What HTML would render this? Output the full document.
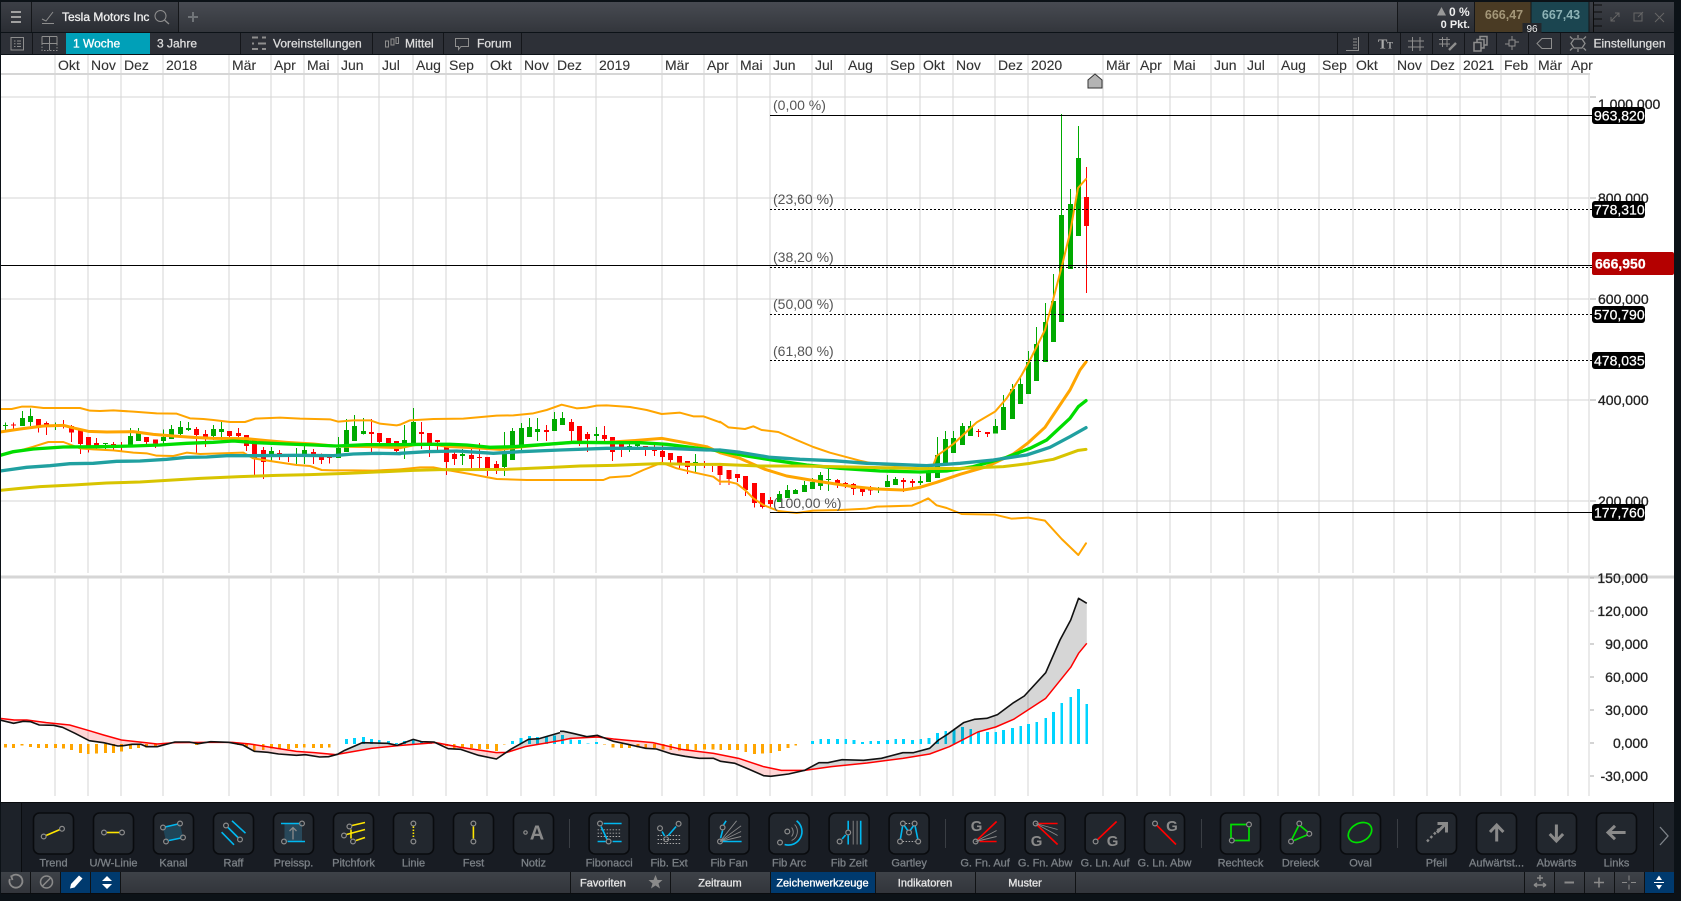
<!DOCTYPE html>
<html lang="de"><head><meta charset="utf-8"><title>Tesla Motors Inc</title>
<style>
html,body{margin:0;padding:0;background:#0c1217;width:1681px;height:901px;overflow:hidden}
svg{display:block;position:absolute;left:0;top:0}
text{font-family:"Liberation Sans",sans-serif}
.t{font-size:12px;fill:#dcdcdc;stroke:#dcdcdc;stroke-width:.3}
.tb{font-size:11px;fill:#e4e4e4;stroke:#e4e4e4;stroke-width:.35}
.h{font-size:14px;fill:#333;stroke:#333;stroke-width:.12}
.a{font-size:14px;fill:#222;stroke:#222;stroke-width:.3}
.r{text-anchor:end}
.w{font-size:14px;fill:#fff;stroke:#fff;stroke-width:.25}
.f{font-size:14px;fill:#555}
.l{font-size:11px;fill:#7b8086;stroke:#7b8086;stroke-width:.3;text-anchor:middle}
.c{text-anchor:middle}
.n{fill:none;stroke:#8c8c8c;stroke-width:1.2}
.y{stroke:#ffe600;stroke-width:1.6;fill:none}
.b{stroke:#00b8f0;stroke-width:1.6;fill:none}
.e{stroke:#f00;stroke-width:1.6;fill:none}
.g{stroke:#00e000;stroke-width:1.7;fill:none}
.s{stroke:#8a8a8a;stroke-width:.9;fill:none}
.d{stroke:#aaa;stroke-width:.9;stroke-dasharray:1.5 1.5;fill:none}
.G{font-size:15px;font-weight:bold;fill:#8a8a8a;text-anchor:middle}
.i{fill:none;stroke:#8e8e8e;stroke-width:1}
.ar{stroke:#8a8a8a;stroke-width:3;fill:none}
</style></head><body>
<svg width="1681" height="901" viewBox="0 0 1681 901" xmlns="http://www.w3.org/2000/svg">
<defs>
<linearGradient id="tg" x1="0" y1="0" x2="0" y2="1"><stop offset="0" stop-color="#484b52"/><stop offset="1" stop-color="#33363c"/></linearGradient>
<linearGradient id="tg2" x1="0" y1="0" x2="0" y2="1"><stop offset="0" stop-color="#3c3f46"/><stop offset="1" stop-color="#2a2d33"/></linearGradient>
<linearGradient id="bg" x1="0" y1="0" x2="0" y2="1"><stop offset="0" stop-color="#3e4248"/><stop offset="1" stop-color="#32353b"/></linearGradient>
<rect id="bt" x=".5" y=".5" width="40" height="41" rx="6" fill="#22272e" stroke="#090b0e" stroke-width="1.6"/>
</defs>

<!-- white chart -->
<rect x="1" y="55" width="1673" height="747" fill="#fff"/>

<!-- grid -->
<g shape-rendering="crispEdges" fill="none" stroke="#d6d6d6">
<path stroke-dasharray="518 5 218" d="M55 55V796M88 55V796M121 55V796M163 55V796M229 55V796M271 55V796M304 55V796M338 55V796M379 55V796M413 55V796M446 55V796M487 55V796M521 55V796M554 55V796M596 55V796M662 55V796M704 55V796M737 55V796M770 55V796M812 55V796M845 55V796M887 55V796M920 55V796M953 55V796M995 55V796M1028 55V796M1103 55V796M1137 55V796M1170 55V796M1211 55V796M1244 55V796M1278 55V796M1319 55V796M1353 55V796M1394 55V796M1427 55V796M1460 55V796M1501 55V796M1535 55V796M1568 55V796"/>
<path d="M1 97H1589M1 198H1589M1 299H1589M1 400H1589M1 501H1589M1589 74V796"/>
<path stroke-width="2" d="M1 74H1590"/>
<path stroke-width="3" d="M1 577H1674"/>
<path stroke="#aaa" d="M1590 97H1596M1590 198H1596M1590 299H1596M1590 400H1596M1590 501H1596M1590 578H1594M1590 611H1594M1590 644H1594M1590 677H1594M1590 710H1594M1590 743H1594M1590 776H1594"/>
</g>

<!-- time labels -->
<g>
<text class="h" x="58" y="70">Okt</text><text class="h" x="91" y="70">Nov</text><text class="h" x="124" y="70">Dez</text><text class="h" x="166" y="70">2018</text><text class="h" x="232" y="70">Mär</text><text class="h" x="274" y="70">Apr</text><text class="h" x="307" y="70">Mai</text><text class="h" x="341" y="70">Jun</text><text class="h" x="382" y="70">Jul</text><text class="h" x="416" y="70">Aug</text><text class="h" x="449" y="70">Sep</text><text class="h" x="490" y="70">Okt</text><text class="h" x="524" y="70">Nov</text><text class="h" x="557" y="70">Dez</text><text class="h" x="599" y="70">2019</text><text class="h" x="665" y="70">Mär</text><text class="h" x="707" y="70">Apr</text><text class="h" x="740" y="70">Mai</text><text class="h" x="773" y="70">Jun</text><text class="h" x="815" y="70">Jul</text><text class="h" x="848" y="70">Aug</text><text class="h" x="890" y="70">Sep</text><text class="h" x="923" y="70">Okt</text><text class="h" x="956" y="70">Nov</text><text class="h" x="998" y="70">Dez</text><text class="h" x="1031" y="70">2020</text><text class="h" x="1106" y="70">Mär</text><text class="h" x="1140" y="70">Apr</text><text class="h" x="1173" y="70">Mai</text><text class="h" x="1214" y="70">Jun</text><text class="h" x="1247" y="70">Jul</text><text class="h" x="1281" y="70">Aug</text><text class="h" x="1322" y="70">Sep</text><text class="h" x="1356" y="70">Okt</text><text class="h" x="1397" y="70">Nov</text><text class="h" x="1430" y="70">Dez</text><text class="h" x="1463" y="70">2021</text><text class="h" x="1504" y="70">Feb</text><text class="h" x="1538" y="70">Mär</text><text class="h" x="1571" y="70">Apr</text>
</g>
<polygon points="1095,74 1102,80 1102,88 1088,88 1088,80" fill="#b4b4b4" stroke="#333"/>

<!-- candles -->
<g fill="none" shape-rendering="crispEdges">
<g transform="translate(0 390) scale(.33333)">
<path stroke="#00aa00" stroke-width="3" d="M16 97V120M67 63V108M91 55V108M166 97V120M316 159V178M391 114V167M415 114V153M490 118V160M514 105V147M541 93V135M565 96V123M640 105V150M664 96V150M814 171V216M889 174V222M913 162V222M1015 141V204M1039 87V186M1063 75V153M1090 84V133"/>
<path stroke="#00aa00" stroke-width="15" d="M16 105V108M67 84V108M91 78V96M166 105V108M316 159V162M391 138V165M415 131V153M490 141V153M514 117V147M541 111V132M565 114V120M640 117V138M664 117V126M814 183V195M913 180V192M1015 174V204M1039 120V186M1063 108V153M1090 123V132"/>
<path stroke="#f00" stroke-width="3" d="M40 97V118M115 87V128M139 94V135M190 90V115M214 105V156M241 118V192M265 141V188M289 144V180M340 156V180M364 156V182M439 141V162M466 148V174M589 111V189M616 120V171M688 123V150M715 114V141M739 135V183M763 150V255M790 171V267M838 180V210M865 198V216M940 177V222M964 190V222M988 195V220M1114 87V186M1138 129V160M1165 144V160M1189 153V186"/>
<path stroke="#f00" stroke-width="15" d="M40 104V107M115 87V108M139 99V110M190 103V107M214 108V128M241 120V162M265 141V168M289 159V168M340 162V168M439 141V156M466 148V160M589 117V135M616 132V141M688 123V138M715 129V138M739 135V168M763 150V207M790 180V216M838 189V192M940 186V192M964 201V210M988 201V204M1114 126V132M1138 129V156M1165 144V160M1189 153V183"/>
</g>
<g transform="translate(400 390) scale(.33333)">
<path stroke="#00aa00" stroke-width="3" d="M13 105V207M40 54V160M187 177V225M313 126V258M337 114V210M364 99V180M388 84V141M412 84V153M463 66V123M487 66V105M589 111V153M688 150V186M712 156V180M886 192V246"/>
<path stroke="#00aa00" stroke-width="15" d="M13 150V168M40 96V160M187 192V198M313 192V231M337 123V210M364 114V165M388 111V141M412 117V126M463 87V123M487 84V105M589 132V138M688 168V174M712 162V168M886 216V219"/>
<path stroke="#f00" stroke-width="3" d="M64 96V177M88 129V201M112 150V180M139 162V255M163 180V225M214 162V234M238 159V234M262 201V258M289 213V252M439 105V153M514 87V153M538 108V168M562 126V186M613 108V156M637 141V213M664 150V201M736 168V198M763 156V198M787 165V216M811 189V219M838 198V237M862 213V252M913 213V234M937 228V246"/>
<path stroke="#f00" stroke-width="15" d="M64 126V132M88 129V168M112 150V156M139 171V216M163 192V207M214 195V207M238 201V204M262 201V243M289 222V234M439 120V126M514 96V123M538 108V153M562 132V147M613 135V147M637 141V186M664 162V171M736 168V174M763 180V183M787 183V201M811 189V210M838 198V222M862 213V231"/>
</g>
<g transform="translate(720 370) scale(.33333)">
<path stroke="#00aa00" stroke-width="3" d="M178 363V396M202 345V384M226 357V372M253 333V366M277 324V357M301 306V360M325 297V363M475 351V369M502 315V351M526 321V345M601 318V345M625 285V336M652 201V324M676 183V282M700 183V249M727 159V225M751 153V198M826 147V190M850 75V180M877 42V147M901 24V102"/>
<path stroke="#00aa00" stroke-width="15" d="M178 372V396M202 360V384M226 360V372M253 345V366M277 336V357M301 315V348M325 327V330M475 354V357M502 333V351M526 327V345M601 333V339M625 306V336M652 255V324M676 207V282M700 204V249M727 168V225M751 168V198M826 168V190M850 111V180M877 57V147M901 42V102"/>
<path stroke="#f00" stroke-width="3" d="M0 288V345M27 300V345M52 312V336M76 318V378M103 339V413M127 369V416M151 381V414M352 327V354M376 336V354M400 339V375M427 351V378M451 348V375M550 324V366M577 327V351M775 177V201M802 186V201"/>
<path stroke="#f00" stroke-width="15" d="M0 288V315M27 300V327M52 312V324M76 318V360M103 339V399M127 369V411M151 390V402M352 330V339M376 339V342M400 342V357M427 354V366M451 357V362M550 330V336M577 333V339M775 183V186M802 186V192"/>
</g>
<path stroke="#00aa00" stroke-width="1" d="M1028.5 351V394M1036.5 327V381M1045.5 303V362M1053.5 274V342M1061.5 114V322M1070.5 189V269M1078.5 126V236"/>
<path stroke="#00aa00" stroke-width="5" d="M1028.5 362V394M1036.5 344V381M1045.5 322V362M1053.5 301V342M1061.5 215V322M1070.5 204V269M1078.5 158V236"/>
<path stroke="#f00" stroke-width="1" d="M1086.5 167V293"/>
<path stroke="#f00" stroke-width="5" d="M1086.5 197V226"/>
</g>

<!-- moving averages / bands -->
<g fill="none" stroke-linejoin="round" stroke-linecap="round">
<g transform="translate(0 390) scale(.33333)">
<path stroke="#ffa500" stroke-width="6" d="M0 57L35 57 65 50 95 50 130 54 240 54 270 62 300 63 340 61 400 65 470 70 530 71 570 85 610 87 640 90 690 96 735 96 765 86 840 83 900 86 990 88 1015 95 1060 91 1110 91 1140 101 1190 106 1200 104"/>
<path stroke="#ffa500" stroke-width="6" d="M0 195L30 190 100 170 145 156 190 156 240 175 280 178 340 181 400 188 440 190 470 197 520 198 560 188 600 192 660 190 730 188 760 205 830 216 890 225 930 228 965 240 1000 241 1060 241 1120 242 1200 238"/>
<path stroke="#ffa500" stroke-width="9" d="M0 126L60 117 130 108 190 106 225 115 265 124 320 126 400 125 460 133 520 138 580 142 640 145 740 146 800 152 860 157 940 162 1000 168 1060 169 1120 170 1200 173"/>
<path stroke="#00dd00" stroke-width="10" d="M0 196L40 185 100 177 190 171 300 170 400 168 480 165 560 160 640 157 700 153 770 158 860 162 940 165 1010 168 1100 164 1200 164"/>
<path stroke="#20a0a0" stroke-width="10" d="M0 243L80 232 150 227 210 221 280 220 350 214 420 213 500 208 560 202 620 201 680 197 760 197 890 196 1000 197 1060 192 1130 190 1200 191"/>
<path stroke="#d8c400" stroke-width="9" d="M0 301L60 295 120 290 220 285 320 279 420 276 500 271 600 265 720 260 830 256 930 254 1040 250 1200 243"/>
</g>
<g transform="translate(400 390) scale(.33333)">
<path stroke="#ffa500" stroke-width="6" d="M0 104L30 91 100 87 190 86 290 77 340 76 400 70 440 60 485 44 530 55 560 53 590 47 620 46 690 51 740 60 785 72 840 68 880 79 910 79 960 97"/>
<path stroke="#ffa500" stroke-width="6" d="M0 238L60 232 100 232 130 238 210 252 290 267 380 270 610 270 630 262 690 258 730 240 785 218 830 235 880 247 940 260 960 275"/>
<path stroke="#ffa500" stroke-width="9" d="M0 173L50 163 100 163 150 170 220 173 300 178 370 170 440 163 520 157 620 157 700 152 785 145 850 157 920 170 960 188"/>
<path stroke="#00dd00" stroke-width="10" d="M0 164L80 163 150 163 200 165 270 172 340 170 440 163 520 157 620 158 720 158 800 163 880 173 960 183"/>
<path stroke="#20a0a0" stroke-width="10" d="M0 190L80 185 170 183 280 190 360 185 480 180 620 175 800 175 920 180 960 180"/>
<path stroke="#d8c400" stroke-width="9" d="M0 243L40 241 120 239 200 239 320 238 440 233 540 228 640 226 780 221 880 223 960 223"/>
</g>
<g transform="translate(720 370) scale(.33333)">
<path stroke="#ffa500" stroke-width="6" d="M0 155L25 172 75 177 100 169 125 180 175 186 225 208 280 231 330 248 375 260 420 272 470 283 530 287 600 287 640 285 650 258 700 222 770 157 825 125 860 85 905 15 930 -30"/>
<path stroke="#ffa500" stroke-width="6" d="M0 335L25 335 50 341 75 360 100 385 130 405 175 423 230 429 280 422 360 420 440 416 470 410 575 407 600 397 625 385 650 406 680 414 725 432 825 434 875 446 925 443 975 452 1025 507 1075 555 1098 520"/>
<path stroke="#ffa500" stroke-width="9" d="M0 248L60 265 135 298 200 318 300 335 400 350 470 357 550 360 600 352 650 337 720 313 800 290 880 252 925 218 975 172 1050 60 1080 0 1098 -24"/>
<path stroke="#00dd00" stroke-width="10" d="M0 243L80 258 170 272 260 285 360 295 480 303 600 306 680 303 760 290 860 262 930 235 980 210 1050 145 1075 110 1098 92"/>
<path stroke="#20a0a0" stroke-width="10" d="M0 240L60 247 150 262 240 268 340 272 440 280 520 283 620 287 720 280 820 270 920 255 990 232 1050 200 1098 173"/>
<path stroke="#d8c400" stroke-width="9" d="M0 283L120 288 240 288 400 291 600 296 720 295 850 290 930 280 1000 268 1075 241 1098 238"/>
</g>
<path stroke="#ffa500" stroke-width="2" d="M1030 360L1045 330 1053 300 1061.7 266.7 1070 233 1078 188 1086 179"/>
</g>

<!-- fib & price lines -->
<g fill="none" stroke="#000" shape-rendering="crispEdges">
<path d="M770 115.5H1592M770 512.5H1592M1 265.5H1592"/>
<path stroke-dasharray="2 2" d="M770 209.5H1592M770 267.5H1592M770 314.5H1592M770 360.5H1592"/>
</g>
<text class="f" x="773" y="110">(0,00 %)</text>
<text class="f" x="773" y="204">(23,60 %)</text>
<text class="f" x="773" y="262">(38,20 %)</text>
<text class="f" x="773" y="309">(50,00 %)</text>
<text class="f" x="773" y="356">(61,80 %)</text>
<text class="f" x="773" y="508">(100,00 %)</text>

<!-- MACD panel -->
<g fill="none" shape-rendering="crispEdges">
<g transform="translate(0 690) scale(.35714 .33333)">
<path stroke="#ffa500" stroke-width="8" d="M15 162V172M38 162V174M62 162V166M85 162V171M108 162V174M130 162V174M155 162V174M178 162V175M200 162V180M225 162V189M247 162V192M270 162V191M295 162V189M318 162V189M340 162V185M365 162V177M388 162V174M410 162V172M435 162V172M460 162V164M550 162V165M668 162V165M690 162V170M712 162V182M737 162V180M760 162V176M783 162V175M808 162V177M830 162V174M852 162V172M878 162V174M900 162V174M922 162V172M1250 162V168M1272 162V175M1295 162V172M1320 162V174M1343 162V177M1365 162V177M1390 162V183M1412 162V164"/>
<path stroke="#00d4ff" stroke-width="8" d="M970 147V162M993 144V162M1018 141V162M1040 147V162M1062 150V162M1088 153V162M1110 159V162M1133 153V162M1157 150V162M1180 155V162M1205 156V162M1435 153V162M1459 144V162M1483 138V162M1505 141V162M1530 141V162M1553 137V162"/>
</g>
<g transform="translate(560 590) scale(.35714 .33333)">
<path stroke="#00d4ff" stroke-width="8" d="M7 435V462M30 448V462M55 450V462M78 460V462M102 456V462M707 453V462M730 447V462M752 447V462M777 447V462M800 447V462M823 450V462M847 456V462M870 453V462M892 453V462M917 450V462M940 447V462M962 447V462M987 450V462M1010 447V462M1033 444V462M1057 429V462M1080 423V462M1103 420V462M1127 411V462M1150 417V462M1172 426V462M1197 426V462M1220 426V462M1242 420V462M1267 414V462M1290 408V462M1312 402V462M1335 396V462M1360 384V462M1382 366V462M1405 339V462M1430 321V462M1452 297V462M1475 342V462"/>
<path stroke="#ffa500" stroke-width="8" d="M125 462V464M148 462V472M172 462V474M195 462V474M218 462V472M240 462V476M265 462V474M288 462V478M310 462V480M335 462V482M357 462V480M380 462V480M405 462V478M428 462V478M450 462V480M475 462V480M497 462V480M520 462V486M545 462V492M567 462V490M590 462V489M615 462V483M638 462V474M660 462V467"/>
</g>
</g>
<g transform="translate(0 690) scale(.35714 .33333)" stroke="none">
<path fill="rgba(255,0,0,.16)" d="M0 90L38 100 65 94 85 95 110 105 150 106 175 112 210 130 250 152 290 158 330 168 345 167 370 163 395 163 410 170 440 170 490 156 440 162 400 157 340 150 290 135 250 122 195 105 130 98 75 90 40 90 0 85Z"/>
<path fill="rgba(255,0,0,.16)" d="M650 157L680 165 712 184 750 187 780 192 830 196 855 194 895 201 920 200 945 193 880 188 830 184 770 174 700 162Z"/>
<path fill="rgba(0,0,0,.16)" d="M945 193L965 181 1015 158 1085 160 1112 166 1040 175Z"/>
<path fill="rgba(0,0,0,.16)" d="M1112 166L1157 148 1180 155 1215 156 1220 158Z"/>
<path fill="rgba(255,0,0,.16)" d="M1220 158L1255 176 1290 178 1340 196 1390 207 1420 187 1390 188 1340 180 1290 172Z"/>
<path fill="rgba(0,0,0,.16)" d="M1420 187L1430 178 1480 148 1510 146 1568 128 1568 152 1470 170Z"/>
</g>
<g transform="translate(560 590) scale(.35714 .33333)" stroke="none">
<path fill="rgba(0,0,0,.16)" d="M0 424L10 424 40 431 75 440 105 436 105 441 30 445 0 452Z"/>
<path fill="rgba(255,0,0,.16)" d="M105 438L150 454 190 463 240 475 270 477 310 491 350 499 390 505 430 505 450 514 490 520 530 538 570 557 590 559 640 552 685 541 620 541 570 530 500 505 430 490 340 478 260 458 150 447Z"/>
<path fill="rgba(0,0,0,.16)" d="M685 541L725 518 750 518 790 509 850 511 900 505 960 488 990 488 1035 475 1060 450 1085 433 1130 398 1160 388 1195 385 1225 374 1270 338 1300 318 1360 248 1400 150 1430 90 1452 25 1475 40 1475 160 1452 190 1430 232 1360 325 1270 388 1220 411 1170 426 1090 470 1035 492 960 505 860 519 760 530Z"/>
</g>
<g fill="none" stroke-linejoin="round">
<path stroke="#f00" stroke-width="1.5" transform="translate(0 690) scale(.35714 .33333)" vector-effect="non-scaling-stroke" d="M0 85L40 90 75 90 130 98 195 105 250 122 290 135 340 150 400 157 440 162 490 158 580 157 650 157 700 162 770 174 830 184 880 188 940 194 1040 175 1115 167 1220 158 1290 172 1340 180 1390 188 1420 187 1470 170 1568 152"/>
<path stroke="#111" stroke-width="1.6" transform="translate(0 690) scale(.35714 .33333)" vector-effect="non-scaling-stroke" d="M0 90L38 100 65 94 85 95 110 105 150 106 175 112 210 130 250 152 290 158 330 168 345 167 370 163 395 163 410 170 440 170 490 156 530 156 555 161 590 155 640 157 680 165 712 184 750 187 780 192 830 196 855 194 895 201 920 200 945 193 965 181 1015 158 1085 160 1112 166 1157 148 1180 155 1215 156 1255 176 1290 178 1340 196 1390 207 1430 178 1480 148 1510 146 1568 128"/>
<path stroke="#f00" stroke-width="1.5" transform="translate(560 590) scale(.35714 .33333)" vector-effect="non-scaling-stroke" d="M0 452L30 445 105 441 150 447 260 458 340 478 430 490 500 505 570 530 620 541 685 541 760 530 860 519 960 505 1035 492 1090 470 1170 426 1220 411 1270 388 1360 325 1430 232 1452 190 1475 160"/>
<path stroke="#111" stroke-width="1.6" transform="translate(560 590) scale(.35714 .33333)" vector-effect="non-scaling-stroke" d="M0 424L10 424 40 431 75 440 105 436 150 454 190 463 240 475 270 477 310 491 350 499 390 505 430 505 450 514 490 520 530 538 570 557 590 559 640 552 685 541 725 518 750 518 790 509 850 511 900 505 960 488 990 488 1035 475 1060 450 1085 433 1130 398 1160 388 1195 385 1225 374 1270 338 1300 318 1360 248 1400 150 1430 90 1452 25 1475 40"/>
</g>

<!-- axis labels -->
<text class="a" x="1598" y="109">1.000,000</text>
<text class="a" x="1598" y="203">800,000</text>
<text class="a" x="1598" y="304">600,000</text>
<text class="a" x="1598" y="405">400,000</text>
<text class="a" x="1598" y="506">200,000</text>
<text class="a r" x="1648" y="583">150,000</text>
<text class="a r" x="1648" y="616">120,000</text>
<text class="a r" x="1648" y="649">90,000</text>
<text class="a r" x="1648" y="682">60,000</text>
<text class="a r" x="1648" y="715">30,000</text>
<text class="a r" x="1648" y="748">0,000</text>
<text class="a r" x="1648" y="781">-30,000</text>
<g>
<rect x="1592" y="107" width="53" height="17" rx="3" fill="#000"/><text class="w" x="1594" y="120.5">963,820</text>
<rect x="1592" y="201" width="53" height="17" rx="3" fill="#000"/><text class="w" x="1594" y="214.5">778,310</text>
<rect x="1592" y="306" width="53" height="17" rx="3" fill="#000"/><text class="w" x="1594" y="319.5">570,790</text>
<rect x="1592" y="352" width="53" height="17" rx="3" fill="#000"/><text class="w" x="1594" y="365.5">478,035</text>
<rect x="1592" y="504" width="53" height="17" rx="3" fill="#000"/><text class="w" x="1594" y="517.5">177,760</text>
<rect x="1592" y="252" width="82" height="23" rx="2" fill="#b40000"/><text class="w" x="1595" y="268.5" style="font-weight:bold">666,950</text>
</g>

<!-- top bar -->
<rect x="1" y="2" width="1673" height="30" fill="url(#tg)"/>
<rect x="1" y="2" width="30" height="30" fill="url(#tg2)"/>
<rect x="32" y="2" width="146" height="30" fill="url(#tg2)"/>
<rect x="1398" y="2" width="77" height="30" fill="url(#tg2)"/>
<rect x="1589" y="2" width="85" height="30" fill="url(#tg2)"/>
<rect x="1475" y="2" width="56" height="30" fill="#4a3b24"/>
<rect x="1531" y="2" width="58" height="30" fill="#1b4550"/>
<g stroke="#15171a" fill="none" shape-rendering="crispEdges"><path d="M31.5 2V32M178.5 2V32M1397.5 2V32M1474.5 2V32M1531 2V32M1589 2V32"/></g>
<path stroke="#a0a0a0" stroke-width="2" d="M11 12H21M11 17H21M11 22H21"/>
<path class="i" d="M42 19L46 21 53 12M42 23.5H54"/>
<text class="t" x="62" y="21" style="fill:#eee;stroke:#eee">Tesla Motors Inc</text>
<circle cx="160.5" cy="16" r="5.5" class="i"/><path class="i" style="stroke-width:1.3" d="M164.5 20L169 24"/>
<path stroke="#707478" stroke-width="2" d="M188 17H198M193 12V22"/>
<path fill="#999" d="M1437 15.5L1441.5 7 1446 15.5Z"/>
<text x="1449" y="16" style="font-size:12px;font-weight:bold;fill:#eee">0 %</text>
<text x="1470" y="28" style="font-size:11px;font-weight:bold;fill:#eee;text-anchor:end">0 Pkt.</text>
<text x="1504" y="19" style="font-size:12.5px;font-weight:bold;fill:#a39678;text-anchor:middle">666,47</text>
<text x="1561" y="19" style="font-size:12.5px;font-weight:bold;fill:#8db2b5;text-anchor:middle">667,43</text>
<rect x="1522.5" y="23" width="19" height="10" fill="#24272c"/>
<text x="1532" y="32" style="font-size:10px;fill:#eee;text-anchor:middle">96</text>
<path stroke="#0c0c0c" fill="none" d="M1593.5 2V32M1593 5H1602M1593 12H1602M1593 19H1602M1593 26H1602"/>
<g class="i" style="stroke:#666"><path d="M1611 21L1619 13M1615 13H1619V17M1611 17V21H1615"/>
<path d="M1634 13H1642V21H1634ZM1638 17L1643 12"/><path d="M1655 13L1664 22M1664 13L1655 22"/></g>

<!-- second toolbar -->
<rect x="1" y="33" width="1673" height="21" fill="#2d3037"/>
<rect x="66" y="33" width="84" height="21" fill="#00a0b8"/>
<g stroke="#14161a" fill="none" shape-rendering="crispEdges"><path d="M32.5 33V54M240.5 33V54M372.5 33V54M443.5 33V54M521.5 33V54M1337.5 33V54M1368.5 33V54M1400.5 33V54M1432.5 33V54M1464.5 33V54M1496.5 33V54M1528.5 33V54M1560.5 33V54"/></g>
<g class="i">
<rect x="11" y="37.5" width="12.5" height="12.5"/><path d="M14 41H15.5M17 41H21M14 43.8H15.5M17 43.8H21M14 46.5H15.5M17 46.5H21"/>
<path d="M42 36.5H57M42 36.5V43.5H57V36.5M49.5 36.5V50.5"/><path stroke-dasharray="1.5 1.5" d="M42 43.5V50.5H57V43.5"/>
<path stroke-width="2" d="M252 37.5H258M262 37.5H266M252 43.5H254M258 43.5H266M252 49H258M262 49H266"/>
<path d="M385.5 41V47H388.5V41ZM391 39V45H394V39ZM396 37.5V43.5H398.5V37.5Z"/>
<path d="M455.5 38.5H468.5V46.5H461L458.5 49.5V46.5H455.5Z"/>
<path d="M1346 50.5H1358.5V37M1353 39H1357M1353 42H1357M1353 45H1357M1353 48H1357"/>
<path d="M1412.5 37V51M1420 37V51M1408 41H1424M1408 47H1424"/>
<path d="M1442.5 37V47M1447 37V47M1439 39.5H1450M1439 44H1450"/>
<path stroke-width="2.4" d="M1449 50L1456 43"/>
<path stroke-width="1.5" d="M1474 42.5H1481V51H1474ZM1477 42.5V39.5H1484V48H1481M1480 39.5V36.5H1487V45H1484"/>
<rect x="1509" y="40" width="6" height="6"/><path d="M1512 36V40M1512 46V50M1505 44H1509M1515 42H1519"/>
<path d="M1537 43.5L1542 38.5H1551.5V48.5H1542Z"/>
<path stroke-width="1.3" d="M1574 39H1582L1585 43.5 1582 48H1574L1571 43.5ZM1578 35V38M1578 49V52M1570 36.5L1572.5 39M1586 36.5L1583.5 39M1570 50.5L1572.5 48M1586 50.5L1583.5 48"/>
</g>
<text class="t" x="73" y="47.5" style="fill:#fff;stroke:#fff">1 Woche</text>
<text class="t" x="157" y="47.5">3 Jahre</text>
<text class="t" x="273" y="47.5">Voreinstellungen</text>
<text class="t" x="405" y="47.5">Mittel</text>
<text class="t" x="477" y="47.5">Forum</text>
<text class="t" x="1593.5" y="47.5">Einstellungen</text>
<text x="1378" y="48.5" style="font-family:'Liberation Serif',serif;font-size:14px;font-weight:bold;fill:#aaa">T</text>
<text x="1387" y="48.5" style="font-family:'Liberation Serif',serif;font-size:9px;font-weight:bold;fill:#aaa">T</text>

<!-- bottom toolbar -->
<rect x="1" y="803" width="1673" height="69" fill="#181c23"/>
<rect x="1" y="803" width="21" height="69" fill="#1d2229"/>
<rect x="1654" y="803" width="20" height="69" fill="#1d2229"/>
<g stroke="#0a0c0f" fill="none" shape-rendering="crispEdges"><path d="M21.5 803V872M1653.5 803V872M1 802.5H1674"/></g>
<g stroke="#3a3e44" fill="none" shape-rendering="crispEdges"><path d="M569.5 819V848M945.5 819V848M1201.5 819V848M1397.5 819V848"/></g>
<path stroke="#7f848a" stroke-width="1.3" fill="none" d="M1660 827L1668 836 1660 845"/>

<g transform="translate(33 812.5)"><use href="#bt"/><path class="y" d="M13 23L27 17"/><circle class="n" cx="10.7" cy="24" r="2.4"/><circle class="n" cx="29" cy="16.3" r="2.4"/><text class="l" x="20.5" y="54">Trend</text></g>
<g transform="translate(93 812.5)"><use href="#bt"/><path class="y" d="M14 20H26"/><circle class="n" cx="11" cy="20" r="2.4"/><circle class="n" cx="29" cy="20" r="2.4"/><text class="l" x="20.5" y="54">U/W-Linie</text></g>
<g transform="translate(153 812.5)"><use href="#bt"/><path fill="#1f4558" d="M10 15L27 11 30 25 13 29Z"/><path class="b" d="M12 14.500L25 11.500M16 28L28 25.500"/><circle class="n" cx="10" cy="15" r="2.4"/><circle class="n" cx="27" cy="11" r="2.4"/><circle class="n" cx="13" cy="29" r="2.4"/><circle class="n" cx="30" cy="25" r="2.4"/><text class="l" x="20.5" y="54">Kanal</text></g>
<g transform="translate(213 812.5)"><use href="#bt"/><path class="b" d="M19 8.300L32.500 20.700M8.600 19.700L21 32.300M15 15L25 25"/><circle class="n" cx="13" cy="13" r="2.4"/><circle class="n" cx="27" cy="27" r="2.4"/><text class="l" x="20.5" y="54">Raff</text></g>
<g transform="translate(273 812.5)"><use href="#bt"/><rect x="11.500" y="11" width="17.500" height="18" fill="#28485a"/><path class="b" d="M8 11H26M14.600 29H32"/><path class="s" style="stroke-width:1.300" d="M20 27V15M16.500 18.500L20 15 23.500 18.500"/><circle class="n" cx="29" cy="11" r="2.4"/><circle class="n" cx="11" cy="29" r="2.4"/><text class="l" x="20.5" y="54">Preissp.</text></g>
<g transform="translate(333 812.5)"><use href="#bt"/><path class="y" d="M19 13L32 10M13.500 22L32 17M23 28L32 25M18 17V26"/><circle class="n" cx="16.400" cy="14" r="2.4"/><circle class="n" cx="11" cy="23" r="2.4"/><circle class="n" cx="20" cy="29" r="2.4"/><text class="l" x="20.5" y="54">Pitchfork</text></g>
<g transform="translate(393 812.5)"><use href="#bt"/><path class="y" stroke-dasharray="1.500 1.500" d="M20.400 14V26"/><circle class="n" cx="20.400" cy="11" r="2.4"/><circle class="n" cx="20.400" cy="29" r="2.4"/><text class="l" x="20.5" y="54">Linie</text></g>
<g transform="translate(453 812.5)"><use href="#bt"/><path class="y" d="M20.400 14V26"/><circle class="n" cx="20.400" cy="11" r="2.4"/><circle class="n" cx="20.400" cy="29" r="2.4"/><text class="l" x="20.5" y="54">Fest</text></g>
<g transform="translate(513 812.5)"><use href="#bt"/><circle class="n" cx="12.500" cy="20" r="1.700"/><text x="24" y="27" style="font-size:20px;font-weight:bold;fill:#8a8a8a;text-anchor:middle">A</text><text class="l" x="20.5" y="54">Notiz</text></g>

<g transform="translate(588.600 812.5)"><use href="#bt"/><path class="d" d="M9 17.300H33M9 20.700H33M9 24H33"/><path class="b" d="M15 11H33M9 29H17M24 29H33M12.500 14L18.500 27"/><circle class="n" cx="11.400" cy="11" r="2.4"/><circle class="n" cx="20" cy="29" r="2.4"/><text class="l" x="20.5" y="54">Fibonacci</text></g>
<g transform="translate(648.600 812.5)"><use href="#bt"/><path class="d" d="M9 23H33M9 27H33M9 31H33"/><path class="b" d="M13.500 19L16 23.500M19.600 23L27.500 14"/><circle class="n" cx="11.400" cy="15.700" r="2.4"/><circle class="n" cx="30" cy="11.300" r="2.4"/><circle class="n" cx="17.500" cy="26.700" r="2.4"/><text class="l" x="20.5" y="54">Fib. Ext</text></g>
<g transform="translate(708.600 812.5)"><use href="#bt"/><path class="s" d="M11.400 29L28 8.300M11.400 29L32.500 13.300M11.400 29L32.500 19M11.400 29L32.500 24"/><path class="b" d="M15 12.300L17.500 8.300M12 25.600L14 18M14 29H33"/><circle class="n" cx="11.400" cy="29" r="2.4"/><circle class="n" cx="14" cy="15" r="2.4"/><text class="l" x="20.5" y="54">Fib Fan</text></g>
<g transform="translate(768.600 812.5)"><use href="#bt"/><path class="b" d="M16 32A13.500 13.500 0 0 0 28 8.300"/><path class="s" d="M23 28A10 10 0 0 0 26 12M23 24A7 7 0 0 0 23 15"/><circle class="n" cx="11.400" cy="30" r="2.4"/><circle class="n" cx="18.700" cy="19" r="2.4"/><text class="l" x="20.5" y="54">Fib Arc</text></g>
<g transform="translate(828.600 812.5)"><use href="#bt"/><path class="b" d="M13.500 26.500L17 22.500M19.600 8.300V17M19.600 23V32M32.100 8.300V32"/><path class="s" d="M24.600 8.300V32M28.500 8.300V32"/><circle class="n" cx="11" cy="29" r="2.4"/><circle class="n" cx="19.600" cy="20" r="2.4"/><text class="l" x="20.5" y="54">Fib Zeit</text></g>
<g transform="translate(888.600 812.5)"><use href="#bt"/><path class="d" d="M17 11H24M14 29H27"/><path class="b" d="M11.800 26.500L14 13.500M15.700 13L19 17.800M21.700 17.800L25 13M26.500 13.500L29.200 26.500"/><circle class="n" cx="11.400" cy="29" r="2.4"/><circle class="n" cx="14.300" cy="11" r="2.4"/><circle class="n" cx="20.400" cy="20" r="2.4"/><circle class="n" cx="26" cy="11" r="2.4"/><circle class="n" cx="29.600" cy="29" r="2.4"/><text class="l" x="20.5" y="54">Gartley</text></g>

<g transform="translate(964.600 812.5)"><use href="#bt"/><path class="s" d="M11 29L32 18M11 29L32 24"/><path class="e" d="M13 27L32 9M15 29H32"/><circle class="n" cx="11" cy="29" r="2.4"/><text class="G" x="12" y="18.500">G</text><text class="l" x="20.5" y="54">G. Fn. Auf</text></g>
<g transform="translate(1024.600 812.5)"><use href="#bt"/><path class="s" d="M11 11L33 17M11 11L33 23"/><path class="e" d="M14 11H33M13 13L33 32"/><circle class="n" cx="11" cy="11" r="2.4"/><text class="G" x="12" y="33.500">G</text><text class="l" x="20.5" y="54">G. Fn. Abw</text></g>
<g transform="translate(1084.600 812.5)"><use href="#bt"/><path class="e" d="M13 27L32 9"/><circle class="n" cx="11" cy="29" r="2.4"/><text class="G" x="28" y="33.500">G</text><text class="l" x="20.5" y="54">G. Ln. Auf</text></g>
<g transform="translate(1144 812.5)"><use href="#bt"/><path class="e" d="M13 13L32 32"/><circle class="n" cx="11" cy="11" r="2.4"/><text class="G" x="28" y="18.500">G</text><text class="l" x="20.5" y="54">G. Ln. Abw</text></g>

<g transform="translate(1220 812.5)"><use href="#bt"/><path class="g" d="M26.500 12H11V25.500M14.700 28H29V15"/><circle class="n" cx="11.800" cy="28" r="2.4"/><circle class="n" cx="29" cy="12" r="2.4"/><text class="l" x="20.5" y="54">Rechteck</text></g>
<g transform="translate(1280 812.5)"><use href="#bt"/><path class="g" d="M20.500 13.500L27.800 19.500M18.500 13.500L12 26.500M14 28L27 22.500"/><circle class="n" cx="19.300" cy="11" r="2.4"/><circle class="n" cx="29.300" cy="21.300" r="2.4"/><circle class="n" cx="11" cy="29" r="2.4"/><text class="l" x="20.5" y="54">Dreieck</text></g>
<g transform="translate(1340 812.5)"><use href="#bt"/><ellipse class="g" cx="20" cy="20" rx="12.500" ry="9" transform="rotate(-30 20 20)"/><text class="l" x="20.5" y="54">Oval</text></g>

<g transform="translate(1416 812.5)"><use href="#bt"/><path class="ar" stroke-dasharray="2.500 2.500" style="stroke-width:2.400" d="M11 29L23.500 16"/><path class="ar" d="M30 11L21 20M21.500 11H30.500V20"/><text class="l" x="20.5" y="54">Pfeil</text></g>
<g transform="translate(1476 812.5)"><use href="#bt"/><path class="ar" d="M20.700 29V13M14 19.500L20.700 12.500 27.400 19.500"/><text class="l" x="20.5" y="54">Aufwärtst...</text></g>
<g transform="translate(1536 812.5)"><use href="#bt"/><path class="ar" d="M20.400 12V28M13.700 21.500L20.400 28.500 27.100 21.500"/><text class="l" x="20.5" y="54">Abwärts</text></g>
<g transform="translate(1596 812.5)"><use href="#bt"/><path class="ar" d="M29.600 20H12.500M19 13.300L12 20 19 26.700"/><text class="l" x="20.5" y="54">Links</text></g>

<!-- bottom tabs -->
<rect x="1" y="872" width="1673" height="21" fill="url(#bg)"/>
<rect x="61" y="872" width="30" height="21" fill="#003a6e"/>
<rect x="91" y="872" width="29" height="21" fill="#003a6e"/>
<rect x="771" y="872" width="104" height="21" fill="#003a6e"/>
<rect x="1644" y="872" width="30" height="21" fill="#003a6e"/>
<g stroke="#101214" fill="none" shape-rendering="crispEdges"><path d="M30.500 872V893M60.500 872V893M90.500 872V893M120.500 872V893M570.500 872V893M670.500 872V893M770.500 872V893M875.500 872V893M975.500 872V893M1075.500 872V893M1524.500 872V893M1554.500 872V893M1584.500 872V893M1614.500 872V893M1644.500 872V893"/></g>
<path d="M1 893.500H1674" stroke="#0a0c0f"/>
<path fill="none" stroke="#8a8a8a" stroke-width="1.800" d="M12 876A6.500 6.500 0 1 1 9.800 879M11 875.500L12.500 880"/>
<circle cx="46.500" cy="882" r="6" fill="none" stroke="#8a8a8a" stroke-width="1.500"/><path stroke="#8a8a8a" stroke-width="1.500" d="M42.500 886L50.500 878"/>
<path fill="#fff" d="M70 888.500L71 884 79 875.500 82.500 878.500 74.500 887.500Z"/>
<path fill="#fff" d="M102 881L107 876 112 881ZM102 884H112L107 889Z"/>
<text class="tb" x="580" y="886.500">Favoriten</text>
<path fill="#8a8a8a" d="M655.500 875L657.500 880H662.500L658.500 883.500 660 888.500 655.500 885.500 651 888.500 652.500 883.500 648.500 880H653.500Z"/>
<text class="tb c" x="720" y="886.500">Zeitraum</text>
<text class="tb c" x="822.500" y="886.500" style="fill:#fff;stroke:#fff">Zeichenwerkzeuge</text>
<text class="tb c" x="925" y="886.500">Indikatoren</text>
<text class="tb c" x="1025" y="886.500">Muster</text>
<path stroke="#8a8a8a" stroke-width="1.500" fill="none" d="M1534 885H1546M1534 885L1537 883M1534 885L1537 887M1546 885L1543 883M1546 885L1543 887M1537 878H1543M1540 875V881"/>
<path stroke="#8a8a8a" stroke-width="2" d="M1564.500 882.500H1574"/>
<path stroke="#8a8a8a" stroke-width="1.500" d="M1594 882.500H1604M1599 877.500V887.500"/>
<path stroke="#8a8a8a" d="M1622 882.500H1627M1631 882.500H1636M1629 875.500V880.500M1629 884.500V889.500"/>
<path stroke="#fff" d="M1654 882.500H1664"/>
<path fill="#fff" d="M1656 880L1659 875.500 1662 880ZM1656 885H1662L1659 889.500Z"/>
<rect x="0" y="0" width="1" height="901" fill="#0c1217"/>
</svg>
</body></html>
